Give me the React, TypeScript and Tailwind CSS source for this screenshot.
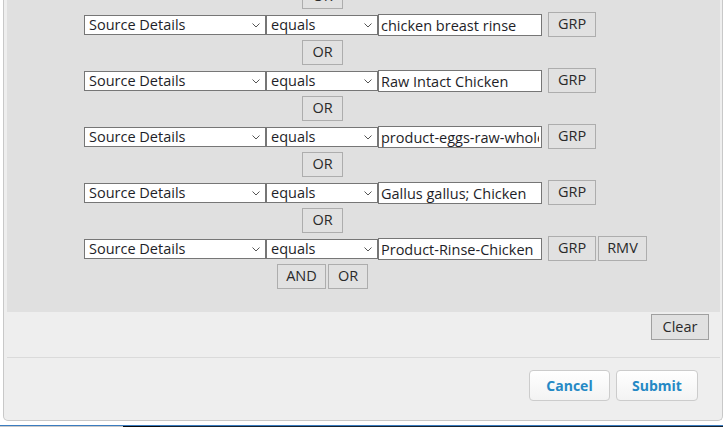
import React from 'react'

interface Criterion {
  field: string
  op: string
  value: string
}

const criteria: Criterion[] = [
  { field: 'Source Details', op: 'equals', value: 'chicken breast rinse' },
  { field: 'Source Details', op: 'equals', value: 'Raw Intact Chicken' },
  { field: 'Source Details', op: 'equals', value: 'product-eggs-raw-whole' },
  { field: 'Source Details', op: 'equals', value: 'Gallus gallus; Chicken' },
  { field: 'Source Details', op: 'equals', value: 'Product-Rinse-Chicken' },
]

const btn =
  'h-[25px] border border-[#adadad] bg-[#e1e1e1] text-[14.5px] leading-none text-[#2a2a2a] flex items-center justify-center'

function Chevron() {
  return (
    <svg
      className="pointer-events-none absolute right-[6px] top-[8px]"
      width="8"
      height="5"
      viewBox="0 0 8 5"
      fill="none"
    >
      <path d="M0.5 0.5 L4 4 L7.5 0.5" stroke="#555" strokeWidth="1" />
    </svg>
  )
}

function Select({ value, width }: { value: string; width: string }) {
  return (
    <div className={`relative h-[20px] mt-[3px] ${width}`}>
      <div className="h-full w-full border border-[#767676] bg-white pl-[4px] text-[14.5px] leading-[18px] text-[#1e1e28] whitespace-nowrap overflow-hidden">
        {value}
      </div>
      <Chevron />
    </div>
  )
}

function OrButton() {
  return (
    <div className="flex pl-[295px]">
      <button className={`${btn} w-[41px]`}>OR</button>
    </div>
  )
}

function Row({ c, last }: { c: Criterion; last: boolean }) {
  return (
    <div className="flex items-start h-[25px] pl-[77px]">
      <Select value={c.field} width="w-[182px]" />
      <Select value={c.op} width="w-[112px]" />
      <input
        readOnly
        value={c.value}
        className="mt-[2px] h-[22px] w-[164px] border border-[#767676] bg-white px-[2px] text-[14.5px] text-[#1e1e28] outline-none"
      />
      <button className={`${btn} w-[48px] ml-[6px]`}>GRP</button>
      {last && <button className={`${btn} w-[49px] ml-[2px]`}>RMV</button>}
    </div>
  )
}

export default function App() {
  return (
    <div className="w-[723px] h-[427px] overflow-hidden bg-white font-['Open_Sans',sans-serif]">
      <div className="ml-[3px] w-[720px] border-x border-b border-[#c8c8c8] rounded-b-[5px] bg-[#eeeeee] pl-[3px] pr-[2px] -mt-[16px]">
        {/* criteria builder */}
        <div className="bg-[#e0e0e0] pb-[23px] flex flex-col gap-[3px]">
          <OrButton />
          {criteria.map((c, i) => (
            <React.Fragment key={i}>
              <Row c={c} last={i === criteria.length - 1} />
              {i < criteria.length - 1 && <OrButton />}
            </React.Fragment>
          ))}
          <div className="flex gap-[2px] pl-[270px]">
            <button className={`${btn} w-[49px]`}>AND</button>
            <button className={`${btn} w-[40px]`}>OR</button>
          </div>
        </div>

        <div className="flex justify-end pr-[11px] mt-[2px]">
          <button className="h-[26px] w-[58px] border border-[#a0a0a0] bg-[#e1e1e1] text-[14.5px] text-[#2a2a2a]">
            Clear
          </button>
        </div>

        <div className="mt-[17px] h-px bg-[#dadada]" />

        <div className="flex justify-end gap-[6px] pr-[22px] pt-[12px] pb-[19px]">
          <button className="h-[31px] w-[81px] rounded-[4px] border border-[#cccccc] bg-gradient-to-b from-white to-[#f3f3f3] text-[14px] font-bold text-[#2589c5]">
            Cancel
          </button>
          <button className="h-[31px] w-[82px] rounded-[4px] border border-[#cccccc] bg-gradient-to-b from-white to-[#f3f3f3] text-[14px] font-bold text-[#2589c5]">
            Submit
          </button>
        </div>
      </div>

      {/* taskbar edge */}
      <div className="mt-[4px] h-px bg-[#3a7cc0]" />
      <div className="flex h-[2px]">
        <div className="w-[123px] bg-[#c9c9c9]" />
        <div className="w-[37px] bg-[#0a0a0a]" />
        <div className="flex-1 bg-[#18222c]" />
      </div>
    </div>
  )
}
